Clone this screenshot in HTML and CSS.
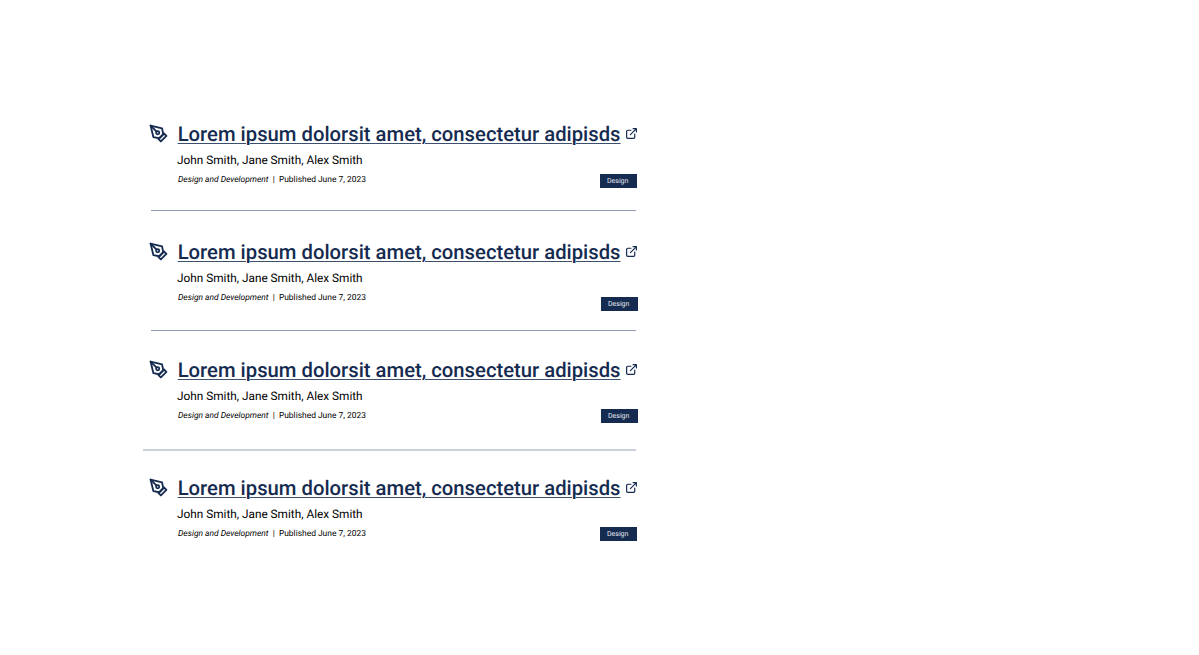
FILE: index.html
```html
<!DOCTYPE html>
<html lang="en">
<head>
<meta charset="utf-8">
<title>Publications</title>
<link rel="stylesheet" href="styles.css">
</head>
<body>
<svg class="sprite" aria-hidden="true">
<symbol id="pen" viewBox="0 0 24 24"><path d="m12 19 7-7 3 3-7 7-3-3z"/><path d="m18 13-1.500-7.500L2 2l3.500 14.500L13 18l5-5z"/><path d="m2 2 7.586 7.586"/><circle cx="11" cy="11" r="2"/></symbol>
<symbol id="ext" viewBox="0 0 24 24"><path d="M18 13v6a2 2 0 0 1-2 2H5a2 2 0 0 1-2-2V8a2 2 0 0 1 2-2h6M15 3h6v6M10 14 21 3"/></symbol>
</svg>
<main class="list">
<article class="item first">
<div class="heading"><svg class="pen"><use href="#pen"/></svg><a class="title">Lorem ipsum dolorsit amet, consectetur adipisds</a><svg class="ext"><use href="#ext"/></svg></div>
<p class="authors">John Smith, Jane Smith, Alex Smith</p>
<div class="meta"><p class="details"><em>Design and Development</em>&nbsp; |&nbsp; Published June 7, 2023</p><span class="tag">Design</span></div>
</article>
<article class="item second">
<div class="heading"><svg class="pen"><use href="#pen"/></svg><a class="title">Lorem ipsum dolorsit amet, consectetur adipisds</a><svg class="ext"><use href="#ext"/></svg></div>
<p class="authors">John Smith, Jane Smith, Alex Smith</p>
<div class="meta"><p class="details"><em>Design and Development</em>&nbsp; |&nbsp; Published June 7, 2023</p><span class="tag">Design</span></div>
</article>
<article class="item third">
<div class="heading"><svg class="pen"><use href="#pen"/></svg><a class="title">Lorem ipsum dolorsit amet, consectetur adipisds</a><svg class="ext"><use href="#ext"/></svg></div>
<p class="authors">John Smith, Jane Smith, Alex Smith</p>
<div class="meta"><p class="details"><em>Design and Development</em>&nbsp; |&nbsp; Published June 7, 2023</p><span class="tag">Design</span></div>
</article>
<article class="item last">
<div class="heading"><svg class="pen"><use href="#pen"/></svg><a class="title">Lorem ipsum dolorsit amet, consectetur adipisds</a><svg class="ext"><use href="#ext"/></svg></div>
<p class="authors">John Smith, Jane Smith, Alex Smith</p>
<div class="meta"><p class="details"><em>Design and Development</em>&nbsp; |&nbsp; Published June 7, 2023</p><span class="tag">Design</span></div>
</article>
</main>
</body>
</html>
```
FILE: styles.css
```css
* { box-sizing: border-box; }
body { margin: 0; background: #fff; color: #000; font-family: Roboto, "Liberation Sans", sans-serif; text-rendering: geometricPrecision; }
.sprite { display: none; }
.list { width: 493px; margin-left: 143px; padding-top: 120px; }
.item { height: 91px; margin-left: 8px; border-bottom: 1px solid #8f9db2; }
.second, .third { height: 120px; padding-top: 27px; }
.third { margin-left: 0; padding-left: 8px; padding-top: 25px; border-bottom: 2px solid #cad1dc; }
.last { height: 110px; border: 0; padding-top: 23px; }
.heading { display: flex; align-items: center; width: 488px; height: 27px; color: #152b50; }
.heading svg { flex: none; fill: none; stroke: currentColor; stroke-linecap: round; stroke-linejoin: round; }
.heading .pen { width: 19px; height: 19px; margin: 0 0 0 -2px; stroke-width: 2.300; }
.title { width: 443px; margin-left: 9.700px; padding-top: 1px; font-size: 20.250px; line-height: 26px; font-weight: 500; white-space: nowrap; text-decoration: underline 1px #3d4f6f; text-underline-offset: 2px; }
.heading .ext { width: 13px; height: 13px; margin: 0 0 1px 4px; stroke-width: 2.200; }
.authors { margin: 4px 0 0 26px; font-size: 11.800px; line-height: 18px; }
.meta { display: flex; justify-content: space-between; align-items: flex-start; width: 486px; padding-left: 27px; }
.details { margin: 4px 0 0; font-size: 8.440px; line-height: 14px; }
.tag { width: 37px; height: 14px; margin-top: 5px; padding-left: 7px; background: #152b50; color: #e3e7ed; font-size: 7px; line-height: 15px; }
.second .tag { margin-top: 10px; margin-right: -1px; }
.third .tag { margin-top: 4px; margin-right: -1px; }
.last .tag { margin-top: 4px; }
```
